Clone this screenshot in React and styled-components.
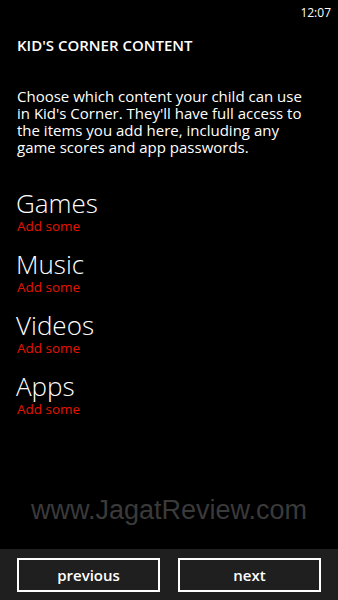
import React from "react";
import styled, { createGlobalStyle } from "styled-components";

const Global = createGlobalStyle`
  html, body {
    margin: 0;
    padding: 0;
    background: #000;
  }
  body {
    font-family: "Open Sans", "Noto Sans", sans-serif;
    color: #fff;
  }
`;

const Screen = styled.div`
  width: 338px;
  height: 600px;
  display: flex;
  flex-direction: column;
  background: #000;
  overflow: hidden;
`;

const StatusBar = styled.div`
  height: 24px;
  display: flex;
  justify-content: flex-end;
  align-items: center;
  padding: 0 7px;
  font-size: 12px;
  color: #fff;
`;

const Content = styled.div`
  flex: 1;
  display: flex;
  flex-direction: column;
  padding: 11px 17px 0;
`;

const Title = styled.h1`
  margin: 0;
  font-size: 15px;
  font-weight: 600;
  line-height: 20px;
`;

const Intro = styled.p`
  margin: 33px 0 0;
  font-size: 15px;
  line-height: 17px;
  font-weight: 400;
  white-space: nowrap;
`;

const List = styled.div`
  display: flex;
  flex-direction: column;
  gap: 15px;
  margin-top: 32px;
`;

const Item = styled.div`
  display: flex;
  flex-direction: column;
`;

const ItemName = styled.div`
  font-size: 26px;
  font-weight: 300;
  line-height: 30px;
  margin-left: -1px;
`;

const ItemAction = styled.div`
  font-size: 13.5px;
  line-height: 16px;
  color: #e51400;
`;

const Watermark = styled.div`
  margin-top: auto;
  margin-bottom: 24px;
  text-align: center;
  font-family: "Liberation Sans", Arial, sans-serif;
  font-size: 27px;
  line-height: 30px;
  color: #3a3a3a;
`;

const AppBar = styled.div`
  height: 51px;
  background: #1f1f1f;
  display: grid;
  grid-template-columns: 1fr 1fr;
  gap: 18px;
  padding: 9px 17px 0;
  box-sizing: border-box;
`;

const Button = styled.button`
  height: 34px;
  background: transparent;
  border: 2px solid #fff;
  color: #fff;
  font-family: "Open Sans", "Noto Sans", sans-serif;
  font-size: 15px;
  font-weight: 600;
  padding: 0;
`;

const items = ["Games", "Music", "Videos", "Apps"];

export default function App() {
  return (
    <>
      <Global />
      <Screen>
        <StatusBar>12:07</StatusBar>
        <Content>
          <Title>KID'S CORNER CONTENT</Title>
          <Intro>
            Choose which content your child can use
            <br />
            in Kid's Corner. They'll have full access to
            <br />
            the items you add here, including any
            <br />
            game scores and app passwords.
          </Intro>
          <List>
            {items.map((name) => (
              <Item key={name}>
                <ItemName>{name}</ItemName>
                <ItemAction>Add some</ItemAction>
              </Item>
            ))}
          </List>
          <Watermark>www.JagatReview.com</Watermark>
        </Content>
        <AppBar>
          <Button>previous</Button>
          <Button>next</Button>
        </AppBar>
      </Screen>
    </>
  );
}
